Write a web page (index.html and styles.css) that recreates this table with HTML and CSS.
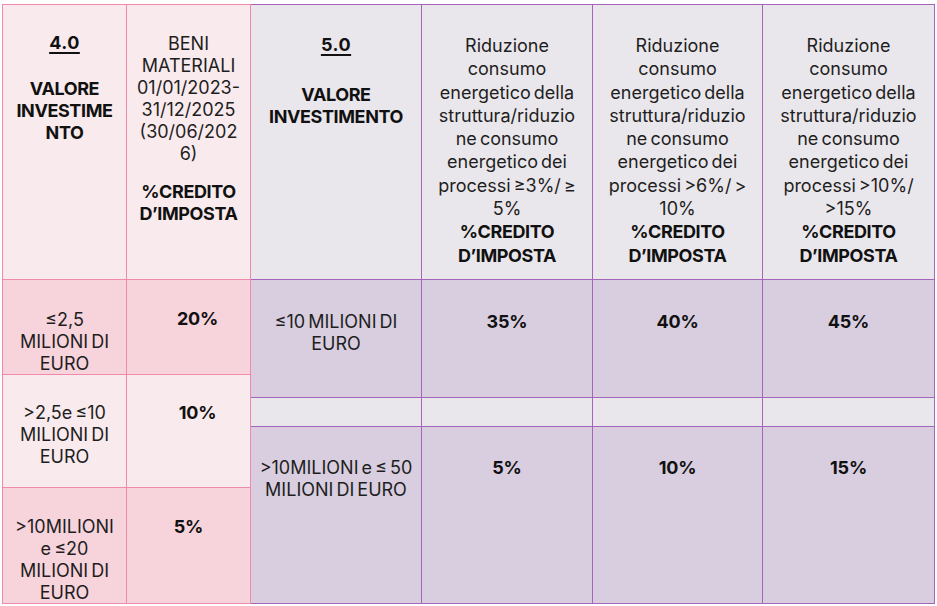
FILE: index.html
```html
<!DOCTYPE html>
<html lang="it">
<head>
<meta charset="utf-8">
<title>Credito d'imposta 4.0 / 5.0</title>
<link rel="stylesheet" href="styles.css">
</head>
<body>
<div class="wrap">
  <div class="grid g40">
    <div class="cell light hd1">
      <p class="b ver">4.0</p>
      <p class="b sp24">VALORE<br>INVESTIME<br>NTO</p>
    </div>
    <div class="cell light hd2">
      <p>BENI<br>MATERIALI<br>01/01/2023-<br>31/12/2025<br>(30/06/202<br>6)</p>
      <p class="b sp16">%CREDITO<br>D’IMPOSTA</p>
    </div>

    <div class="cell pink r1">≤2,5<br>MILIONI DI<br>EURO</div>
    <div class="cell pink r1 pct shift">20%</div>

    <div class="cell light r2">&gt;2,5e ≤10<br>MILIONI DI<br>EURO</div>
    <div class="cell light r2 pct shift">10%</div>

    <div class="cell pink r3">&gt;10MILIONI<br>e ≤20<br>MILIONI DI<br>EURO</div>
    <div class="cell pink r3 pct">5%</div>
  </div>

  <div class="grid g50">
    <div class="cell gray hd3">
      <p class="b ver">5.0</p>
      <p class="b sp28">VALORE<br>INVESTIMENTO</p>
    </div>
    <div class="cell gray hd4">
      <p>Riduzione<br>consumo<br>energetico della<br>struttura/riduzio<br>ne consumo<br>energetico dei<br>processi ≥3%/ ≥<br>5%</p>
      <p class="b">%CREDITO<br>D’IMPOSTA</p>
    </div>
    <div class="cell gray hd4">
      <p>Riduzione<br>consumo<br>energetico della<br>struttura/riduzio<br>ne consumo<br>energetico dei<br>processi &gt;6%/ &gt;<br>10%</p>
      <p class="b">%CREDITO<br>D’IMPOSTA</p>
    </div>
    <div class="cell gray hd4">
      <p>Riduzione<br>consumo<br>energetico della<br>struttura/riduzio<br>ne consumo<br>energetico dei<br>processi &gt;10%/<br>&gt;15%</p>
      <p class="b">%CREDITO<br>D’IMPOSTA</p>
    </div>

    <div class="cell lav q1">≤10 MILIONI DI<br>EURO</div>
    <div class="cell lav q1 pct">35%</div>
    <div class="cell lav q1 pct">40%</div>
    <div class="cell lav q1 pct">45%</div>

    <div class="cell gray"></div>
    <div class="cell gray"></div>
    <div class="cell gray"></div>
    <div class="cell gray"></div>

    <div class="cell lav q3">&gt;10MILIONI e ≤ 50<br>MILIONI DI EURO</div>
    <div class="cell lav q3 pct">5%</div>
    <div class="cell lav q3 pct">10%</div>
    <div class="cell lav q3 pct">15%</div>
  </div>
</div>
</body>
</html>
```

FILE: styles.css
```css
* {
  box-sizing: border-box;
}

html, body {
  margin: 0;
  padding: 0;
  background: #ffffff;
}

body {
  font-family: Inter, "Noto Sans", "DejaVu Sans", sans-serif;
  font-size: 18px;
  line-height: 22px;
  color: #1e1e1e;
  word-spacing: -2px;
}

.wrap {
  display: flex;
  margin: 4px 0 0 2px;
}

.grid {
  display: grid;
  gap: 1px;
}

.g40 {
  background: #f08aab;
  padding: 1px;
  grid-template-columns: 123px 123px;
  grid-template-rows: 274px 94px 112px 115px;
}

.g50 {
  background: #a465bb;
  padding: 1px 1px 1px 0;
  grid-template-columns: 170px 170px 169px 171px;
  grid-template-rows: 274px 117px 28px 176px;
}

.cell {
  text-align: center;
  overflow: hidden;
}

.cell p {
  margin: 0;
}

.light { background: #f9eaed; }
.pink  { background: #f7d3db; }
.gray  { background: #eae7ec; }
.lav   { background: #d8cedf; }

.b {
  font-weight: 700;
  color: #111111;
  letter-spacing: -0.4px;
}

.ver {
  text-decoration: underline;
  text-decoration-thickness: 1.5px;
  text-underline-offset: 3px;
  letter-spacing: 0.5px;
}

.sp24 { margin-top: 24px !important; }
.sp16 { margin-top: 16px !important; }
.sp28 { margin-top: 28px !important; }

.hd1 { padding-top: 27px; }
.hd2 { padding-top: 28px; }
.hd3 { padding-top: 29px; }
.hd4 {
  padding-top: 29px;
  line-height: 23.3px;
}

.pct {
  font-weight: 700;
  color: #111111;
  letter-spacing: -0.2px;
}

.shift { padding-left: 18px; }

.r1 { padding-top: 29px; }
.r1.pct { padding-top: 28px; }
.r2 { padding-top: 27px; }
.r3 { padding-top: 28px; }
.q1 { padding-top: 31px; }
.q3 { padding-top: 30px; }
```
